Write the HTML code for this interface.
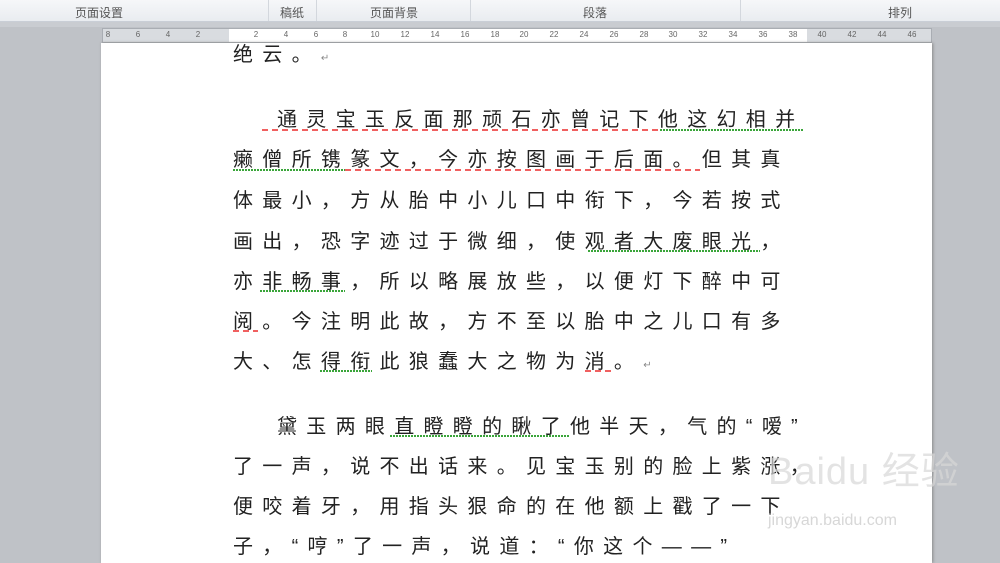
<!DOCTYPE html><html><head><meta charset="utf-8"><style>
body{margin:0;width:1000px;height:554px;overflow:hidden;background:#bfc2c7;position:relative;font-family:"Liberation Sans","Noto Sans CJK SC",sans-serif}
.rib{position:absolute;left:0;top:0;width:1000px;height:21px;background:linear-gradient(#f6f7f9,#e9ecf0);border-bottom:1px solid #c9ced6;font-size:12px;color:#555}
.rib span{position:absolute;top:4px}
.sep{position:absolute;top:0;width:1px;height:21px;background:#d3d7dd}
.band{position:absolute;top:22px;left:0;width:1000px;height:5px;background:#c9ccd1}
.ruler{position:absolute;left:102px;top:28px;width:828px;height:13px;background:#d9dce0;border:1px solid #a9adb3;font-size:8px;color:#666;white-space:nowrap}
.rw{position:absolute;left:126px;top:0;width:578px;height:13px;background:#fff}
.ruler b{position:absolute;top:1px;font-weight:normal;transform:translateX(-50%)}
.page{position:absolute;left:101px;top:43px;width:831px;height:520px;background:#fff;box-shadow:1px 0 3px #888}
.l{position:absolute;font-size:20px;line-height:24px;letter-spacing:9.3px;color:#222;white-space:nowrap}
.r{position:absolute;height:2px;top:0;background:repeating-linear-gradient(90deg,#f06060 0 6px,transparent 6px 10px)}
.g{position:absolute;height:2px;background:repeating-linear-gradient(90deg,#3aa53a 0 2px,transparent 2px 3px)}
.wm{position:absolute;left:768px;top:440px;color:rgba(215,215,215,.7);font-size:38px;letter-spacing:1px}
.wm2{position:absolute;left:768px;top:512px;color:rgba(205,205,205,.8);font-size:16px}
</style></head><body>
<div class="rib"><span style="left:75px">页面设置</span><span style="left:280px">稿纸</span><span style="left:370px">页面背景</span><span style="left:583px">段落</span><span style="left:888px">排列</span>
<div class="sep" style="left:268px"></div><div class="sep" style="left:316px"></div><div class="sep" style="left:470px"></div><div class="sep" style="left:740px"></div></div>
<div class="band"></div>
<div class="ruler"><div class="rw"></div>
<b style="left:5px">8</b><b style="left:35px">6</b><b style="left:65px">4</b><b style="left:95px">2</b>
<b style="left:153px">2</b><b style="left:183px">4</b><b style="left:213px">6</b><b style="left:242px">8</b><b style="left:272px">10</b><b style="left:302px">12</b><b style="left:332px">14</b><b style="left:362px">16</b><b style="left:392px">18</b><b style="left:421px">20</b><b style="left:451px">22</b><b style="left:481px">24</b><b style="left:511px">26</b><b style="left:541px">28</b><b style="left:570px">30</b><b style="left:600px">32</b><b style="left:630px">34</b><b style="left:660px">36</b><b style="left:690px">38</b><b style="left:719px">40</b><b style="left:749px">42</b><b style="left:779px">44</b><b style="left:809px">46</b>
</div>
<div class="page"></div>
<div class="l" style="left:233px;top:43px">绝云。<span style="font-size:10px;color:#888">↵</span></div>
<div class="l" style="left:277px;top:108px">通灵宝玉反面那顽石亦曾记下他这幻相并</div>
<div class="r" style="left:262px;top:129px;width:398px"></div><div class="g" style="left:660px;top:129px;width:143px"></div>
<div class="l" style="left:233px;top:148px">癞僧所镌篆文，今亦按图画于后面。但其真</div>
<div class="g" style="left:233px;top:169px;width:112px"></div><div class="r" style="left:345px;top:169px;width:355px"></div>
<div class="l" style="left:233px;top:189px">体最小，方从胎中小儿口中衔下，今若按式</div>
<div class="l" style="left:233px;top:230px">画出，恐字迹过于微细，使观者大废眼光，</div>
<div class="g" style="left:588px;top:250px;width:172px"></div>
<div class="l" style="left:233px;top:270px">亦非畅事，所以略展放些，以便灯下醉中可</div>
<div class="g" style="left:260px;top:290px;width:85px"></div>
<div class="l" style="left:233px;top:310px">阅。今注明此故，方不至以胎中之儿口有多</div>
<div class="r" style="left:233px;top:330px;width:25px"></div>
<div class="l" style="left:233px;top:350px">大、怎得衔此狼蠢大之物为消。<span style="font-size:10px;color:#888">↵</span></div>
<div class="g" style="left:320px;top:370px;width:52px"></div><div class="r" style="left:585px;top:370px;width:30px"></div>
<div class="l" style="left:277px;top:415px">黛玉两眼直瞪瞪的瞅了他半天，气的“嗳”</div>
<div class="g" style="left:390px;top:435px;width:180px"></div>
<div class="l" style="left:233px;top:455px">了一声，说不出话来。见宝玉别的脸上紫涨，</div>
<div class="l" style="left:233px;top:495px">便咬着牙，用指头狠命的在他额上戳了一下</div>
<div class="l" style="left:233px;top:535px">子，“哼”了一声，说道：“你这个——”</div>
<div class="wm">Baidu 经验</div>
<div class="wm2">jingyan.baidu.com</div>
</body></html>
